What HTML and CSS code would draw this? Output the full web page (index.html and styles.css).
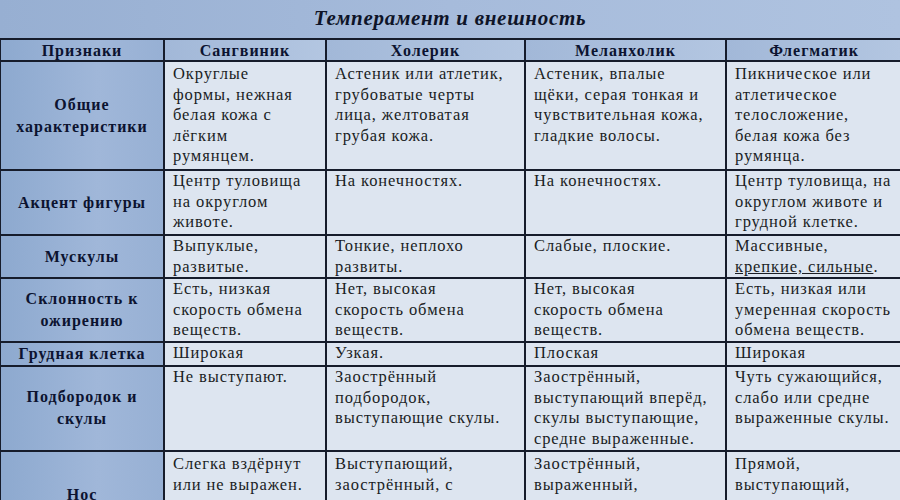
FILE: index.html
```html
<!DOCTYPE html>
<html lang="ru">
<head>
<meta charset="utf-8">
<title>Темперамент и внешность</title>
<link rel="stylesheet" href="styles.css">
</head>
<body>
<div class="page">
  <h1 class="title">Темперамент и внешность</h1>
  <table class="grid">
    <colgroup>
      <col class="c1"><col class="c2"><col class="c3"><col class="c4"><col class="c5">
    </colgroup>
    <thead>
      <tr class="r-head">
        <th class="lead">Признаки</th>
        <th>Сангвиник</th>
        <th>Холерик</th>
        <th>Меланхолик</th>
        <th>Флегматик</th>
      </tr>
    </thead>
    <tbody>
      <tr class="r1">
        <th class="lead">Общие<br>характеристики</th>
        <td>Округлые<br>формы, нежная<br>белая кожа с<br>лёгким<br>румянцем.</td>
        <td>Астеник или атлетик,<br>грубоватые черты<br>лица, желтоватая<br>грубая кожа.</td>
        <td>Астеник, впалые<br>щёки, серая тонкая и<br>чувствительная кожа,<br>гладкие волосы.</td>
        <td>Пикническое или<br>атлетическое<br>телосложение,<br>белая кожа без<br>румянца.</td>
      </tr>
      <tr class="r2">
        <th class="lead">Акцент фигуры</th>
        <td>Центр туловища<br>на округлом<br>животе.</td>
        <td>На конечностях.</td>
        <td>На конечностях.</td>
        <td>Центр туловища, на<br>округлом животе и<br>грудной клетке.</td>
      </tr>
      <tr class="r3">
        <th class="lead">Мускулы</th>
        <td>Выпуклые,<br>развитые.</td>
        <td>Тонкие, неплохо<br>развиты.</td>
        <td>Слабые, плоские.</td>
        <td>Массивные,<br><span class="ul">крепкие, сильные</span>.</td>
      </tr>
      <tr class="r4">
        <th class="lead">Склонность к<br>ожирению</th>
        <td>Есть, низкая<br>скорость обмена<br>веществ.</td>
        <td>Нет, высокая<br>скорость обмена<br>веществ.</td>
        <td>Нет, высокая<br>скорость обмена<br>веществ.</td>
        <td>Есть, низкая или<br>умеренная скорость<br>обмена веществ.</td>
      </tr>
      <tr class="r5">
        <th class="lead">Грудная клетка</th>
        <td>Широкая</td>
        <td>Узкая.</td>
        <td>Плоская</td>
        <td>Широкая</td>
      </tr>
      <tr class="r6">
        <th class="lead">Подбородок и<br>скулы</th>
        <td>Не выступают.</td>
        <td>Заострённый<br>подбородок,<br>выступающие скулы.</td>
        <td>Заострённый,<br>выступающий вперёд,<br>скулы выступающие,<br>средне выраженные.</td>
        <td>Чуть сужающийся,<br>слабо или средне<br>выраженные скулы.</td>
      </tr>
      <tr class="r7">
        <th class="lead">Нос</th>
        <td>Слегка вздёрнут<br>или не выражен.</td>
        <td>Выступающий,<br>заострённый, с</td>
        <td>Заострённый,<br>выраженный,</td>
        <td>Прямой,<br>выступающий,</td>
      </tr>
    </tbody>
  </table>
</div>
</body>
</html>
```

FILE: styles.css
```css
html, body {
  margin: 0;
  padding: 0;
}
body {
  width: 900px;
  height: 500px;
  overflow: hidden;
  background: linear-gradient(90deg, #97afd2 0%, #a6bbdb 50%, #afc3e0 100%);
  font-family: "Liberation Serif", "Times New Roman", serif;
  color: #161a24;
}
.page {
  width: 900px;
}
.title {
  margin: 0;
  height: 38px;
  line-height: 37px;
  text-align: center;
  font-size: 21px;
  font-weight: bold;
  font-style: italic;
  color: #0e1428;
  letter-spacing: 0.7px;
}
.grid {
  border-collapse: collapse;
  table-layout: fixed;
  width: 902px;
  margin-left: -1px;
}
.c1 { width: 164px; }
.c2 { width: 162px; }
.c3 { width: 199px; }
.c4 { width: 201px; }
.c5 { width: 176px; }
.grid th, .grid td {
  border: 2px solid #161c2b;
  white-space: nowrap;
  overflow: hidden;
}
.grid th {
  font-size: 16px;
  font-weight: bold;
  color: #0c1330;
  text-align: center;
  letter-spacing: 1px;
}
.r-head th {
  height: 20px;
  padding: 0;
  line-height: 19px;
  background: linear-gradient(90deg, #a2b8d8, #b3c6e1);
}
.grid th.lead {
  background: linear-gradient(90deg, #8da9cf 0%, #a0b7d9 60%, #97b0d4 100%);
  vertical-align: middle;
  padding: 0 2px;
  line-height: 22px;
}
.r-head th.lead {
  line-height: 19px;
}
.grid td {
  background: #dde5f0;
  vertical-align: top;
  padding: 0 4px 0 8px;
  font-size: 16.5px;
  line-height: 20.6px;
  letter-spacing: 0.9px;
  color: #1a1d24;
}
.r1 td, .r1 th { height: 105px; }
.r1 td { padding-top: 2px; }
.r2 td, .r2 th { height: 63px; }
.r3 td, .r3 th { height: 41px; }
.r4 td, .r4 th { height: 60px; }
.r5 td, .r5 th { height: 20px; }
.r6 td, .r6 th { height: 83px; }
.r7 td, .r7 th { height: 84px; }
.r7 td { padding-top: 2px; }
.ul {
  text-decoration: underline;
}
```
